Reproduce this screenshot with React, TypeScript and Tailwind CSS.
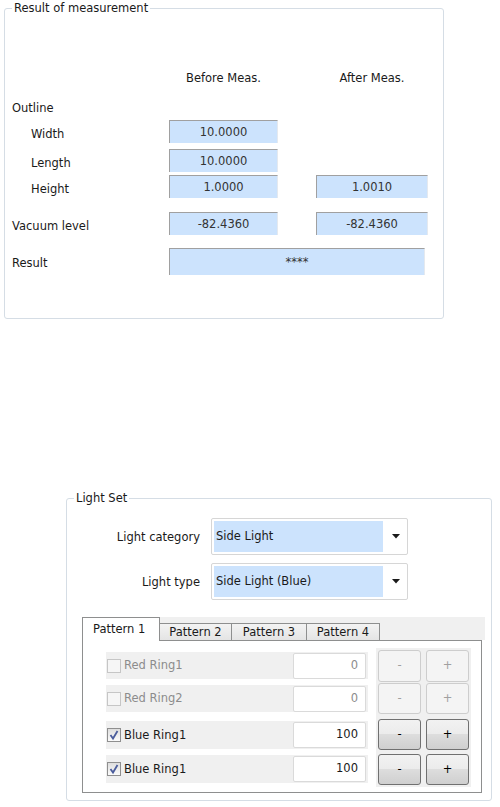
import React from "react";

function Field({ className, value }: { className: string; value: string }) {
  return (
    <div
      className={`${className} flex items-center justify-center pt-[1px] bg-[#cce3fd] border-t border-l border-r border-t-[#a0a0a0] border-l-[#a0a0a0] border-r-[#e4e9ef] text-[#333]`}
    >
      {value}
    </div>
  );
}

function MeasureRow({
  label,
  indent,
  before,
  after,
  className,
}: {
  label: string;
  indent?: boolean;
  before: string;
  after?: string;
  className: string;
}) {
  return (
    <div className={`flex h-[23px] ${className}`}>
      <div className={`w-[157px] pt-[7px] leading-[15px] ${indent ? "pl-[19px]" : ""}`}>{label}</div>
      <Field className="w-[109px] h-[23px]" value={before} />
      {after && <Field className="ml-[38px] w-[112px] h-[23px]" value={after} />}
    </div>
  );
}

function MeasureGroup() {
  return (
    <div className="ml-[4px] mt-[8px] w-[440px] h-[311px] border border-[#d5dde5] rounded-[3px]">
      <div className="-mt-[8px] ml-[7px] w-fit bg-white px-[2px] leading-[15px]">Result of measurement</div>
      <div className="px-[7px]">
        <div className="mt-[55px] flex h-[16px] items-center">
          <div className="w-[157px]" />
          <div className="w-[109px] text-center">Before Meas.</div>
          <div className="ml-[38px] w-[112px] text-center">After Meas.</div>
        </div>
        <div className="mt-[13px] h-[16px] leading-[16px]">Outline</div>
        <MeasureRow className="mt-[4px]" label="Width" indent before="10.0000" />
        <MeasureRow className="mt-[6px]" label="Length" indent before="10.0000" />
        <MeasureRow className="mt-[3px]" label="Height" indent before="1.0000" after="1.0010" />
        <MeasureRow className="mt-[14px]" label="Vacuum level" before="-82.4360" after="-82.4360" />
        <div className="mt-[13px] flex h-[27px]">
          <div className="w-[157px] pt-[8px] leading-[15px]">Result</div>
          <Field className="w-[256px] h-[27px]" value="****" />
        </div>
      </div>
    </div>
  );
}

function Select({ value }: { value: string }) {
  return (
    <div className="ml-[11px] flex h-[37px] w-[197px] items-center rounded-[2px] border border-[#d6d6d6] bg-white p-[2px]">
      <div className="flex h-full w-[169px] items-center bg-[#cce3fd] pl-[2px] pt-[1px]">{value}</div>
      <svg className="ml-auto mr-[5px]" width="8" height="5" viewBox="0 0 8 5">
        <path d="M0 0 H8 L4 4.5 Z" fill="#1a1a1a" />
      </svg>
    </div>
  );
}

function Checkbox({ checked, disabled }: { checked?: boolean; disabled?: boolean }) {
  return (
    <div
      className={`ml-[1px] flex h-[14px] w-[14px] items-center justify-center border ${
        disabled ? "border-[#c6c6c6] bg-[#f6f6f6]" : "border-[#8f8f8f] bg-[linear-gradient(to_bottom,#dedede,#fbfbfb)]"
      }`}
    >
      {checked && (
        <svg width="12" height="12" viewBox="0 0 12 12">
          <path d="M2.5 6 L5 9.5 L9.5 2" fill="none" stroke="#4a5c9c" strokeWidth="1.8" />
        </svg>
      )}
    </div>
  );
}

function RingRow({
  label,
  value,
  checked,
  disabled,
  className,
}: {
  label: string;
  value: string;
  checked?: boolean;
  disabled?: boolean;
  className: string;
}) {
  return (
    <div className={`flex items-center bg-[#f0f0f0] ${className}`}>
      <Checkbox checked={checked} disabled={disabled} />
      <span className={`ml-[3px] pt-[1px] ${disabled ? "text-[#8c8c8c]" : "text-[#1a1a1a]"}`}>{label}</span>
      <div
        className={`ml-auto mr-[2px] flex h-[26px] w-[73px] items-center justify-end rounded-[2px] border border-[#dadada] bg-white pr-[7px] ${
          disabled ? "text-[#8c8c8c]" : "text-[#1a1a1a]"
        }`}
      >
        {value}
      </div>
    </div>
  );
}

function StepButtons({ disabled, className }: { disabled?: boolean; className: string }) {
  const base = "flex w-[43px] items-center justify-center rounded-[3px] border";
  const style = disabled
    ? "border-[#cdcdcd] bg-[#f4f4f4] text-[#a0a0a0]"
    : "border-[#707070] bg-[linear-gradient(to_bottom,#f2f2f2_0%,#ebebeb_50%,#dddddd_50%,#cfcfcf_100%)] text-black";
  return (
    <div className={`flex gap-[5px] ${className}`}>
      <div className={`${base} ${style}`}>-</div>
      <div className={`${base} ${style}`}>+</div>
    </div>
  );
}

function LightSetGroup() {
  const tabs = ["Pattern 2", "Pattern 3", "Pattern 4"];
  const tabWidths = ["w-[72px]", "w-[75px]", "w-[73px]"];
  return (
    <div className="ml-[66px] mt-[179px] w-[426px] h-[303px] border border-[#d5dde5] rounded-[3px]">
      <div className="-mt-[8px] ml-[7px] w-fit bg-white px-[2px] leading-[15px]">Light Set</div>
      <div className="mt-[12px] flex items-center">
        <div className="w-[133px] pt-[2px] text-right">Light category</div>
        <Select value="Side Light" />
      </div>
      <div className="mt-[8px] flex items-center">
        <div className="w-[133px] pt-[2px] text-right">Light type</div>
        <Select value="Side Light (Blue)" />
      </div>

      <div className="ml-[15px] mt-[17px]">
        <div className="flex h-[23px] w-[403px] items-start bg-[#f0f0f0]">
          <div className="relative z-10 h-[24px] w-[78px] border border-b-0 border-[#8e8f8f] bg-white pl-[10px] pt-[4px] leading-[15px]">
            Pattern 1
          </div>
          {tabs.map((t, i) => (
            <div
              key={t}
              className={`mt-[6px] flex h-[17px] ${tabWidths[i]} items-center justify-center border border-l-0 border-b-0 border-[#8e8f8f] bg-[linear-gradient(to_bottom,#f3f3f3,#e4e4e4)] pt-[1px] leading-[15px]`}
            >
              {t}
            </div>
          ))}
        </div>
        <div className="flex h-[153px] w-[400px] border border-[#8e8f8f] bg-white pl-[23px] pt-[7px]">
          <div className="flex w-[262px] flex-col">
            <RingRow className="mt-[4px] h-[27px]" label="Red Ring1" value="0" disabled />
            <RingRow className="mt-[6px] h-[27px]" label="Red Ring2" value="0" disabled />
            <RingRow className="mt-[9px] h-[28px]" label="Blue Ring1" value="100" checked />
            <RingRow className="mt-[6px] h-[28px]" label="Blue Ring1" value="100" checked />
          </div>
          <div className="ml-[8px] flex h-[139px] w-[95px] flex-col bg-[#f0f0f0] px-[2px] pt-[2px]">
            <StepButtons className="h-[32px]" disabled />
            <StepButtons className="mt-[1px] h-[31px]" disabled />
            <StepButtons className="mt-[5px] h-[31px]" />
            <StepButtons className="mt-[4px] h-[31px]" />
          </div>
        </div>
      </div>
    </div>
  );
}

export default function App() {
  return (
    <div className="h-[807px] w-[500px] overflow-hidden bg-white font-['DejaVu_Sans',sans-serif] text-[11.5px] text-[#1a1a1a]">
      <MeasureGroup />
      <LightSetGroup />
    </div>
  );
}
